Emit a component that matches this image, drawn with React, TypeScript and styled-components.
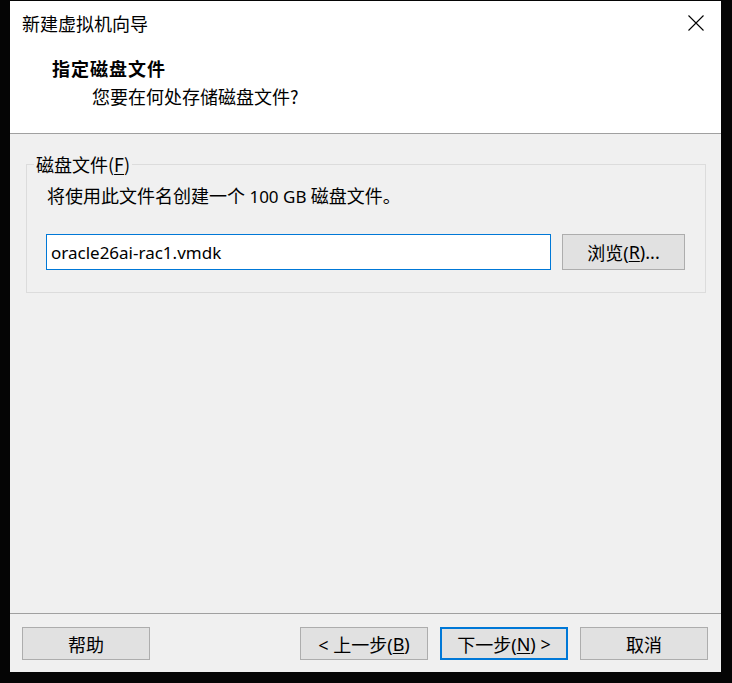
import React from "react";
import styled, { createGlobalStyle } from "styled-components";

const Global = createGlobalStyle`
  html, body { margin: 0; padding: 0; background: #050505; }
  body { font-family: "Noto Sans", "Noto Sans CJK SC", sans-serif; color: #000; }
  * { box-sizing: border-box; }
`;

const Stage = styled.div`
  padding: 1px 0 0 10px;
  width: 732px;
  height: 683px;
`;

const Window = styled.div`
  width: 711px;
  height: 671px;
  background: #f0f0f0;
  display: flex;
  flex-direction: column;
`;

const Header = styled.div`
  height: 133px;
  background: #fff;
  border-bottom: 1px solid #a0a0a0;
  display: flex;
  flex-direction: column;
`;

const TitleBar = styled.div`
  height: 43px;
  display: flex;
  align-items: center;
  justify-content: space-between;
  padding: 0 17px 0 12px;
`;

const Title = styled.div`
  font-family: "Noto Sans CJK SC", sans-serif;
  font-size: 18px;
  line-height: 24px;
`;

const CloseButton = styled.button`
  width: 16px;
  height: 16px;
  padding: 0;
  border: 0;
  background: transparent;
  display: flex;
  cursor: default;
`;

const HeadingBlock = styled.div`
  padding: 12px 0 0 42px;
  display: flex;
  flex-direction: column;
`;

const Heading = styled.div`
  font-family: "Noto Sans CJK SC", sans-serif;
  font-size: 18px;
  font-weight: 700;
  letter-spacing: 1px;
  line-height: 24px;
`;

const SubHeading = styled.div`
  font-family: "Noto Sans CJK SC", sans-serif;
  font-size: 18px;
  line-height: 24px;
  margin: 4px 0 0 40px;
`;

const Content = styled.div`
  flex: 1;
  padding: 21px 15px 0 16px;
`;

const Group = styled.fieldset`
  margin: 0;
  min-width: 0;
  border: 1px solid #dcdcdc;
  padding: 11px 20px 22px 19px;
`;

const Legend = styled.legend`
  font-family: "Noto Sans CJK SC", sans-serif;
  font-size: 18px;
  line-height: 18px;
  padding: 0 2px;
  margin-left: -12px;
`;

const Mnemonic = styled.span`
  text-decoration: underline;
  text-underline-offset: 2px;
`;

const Info = styled.div`
  font-size: 18px;
  line-height: 23px;
  padding-left: 1px;
  font-family: "Noto Sans CJK SC", sans-serif;
`;

const Latin = styled.span`
  font-family: "Noto Sans", sans-serif;
  font-size: 17px;
`;

const FileRow = styled.div`
  margin-top: 26px;
  display: flex;
  gap: 11px;
`;

const FileInput = styled.input`
  flex: 1;
  min-width: 0;
  height: 36px;
  border: 1px solid #0078d7;
  background: #fff;
  padding: 0 4px;
  font-family: "Noto Sans", sans-serif;
  font-size: 17px;
  color: #000;
  outline: none;
`;

const Button = styled.button<{ $primary?: boolean; $w?: number; $h?: number }>`
  width: ${(p) => p.$w ?? 128}px;
  height: ${(p) => p.$h ?? 33}px;
  background: #e1e1e1;
  border: ${(p) => (p.$primary ? "2px solid #0078d7" : "1px solid #adadad")};
  font-family: "Noto Sans", "Noto Sans CJK SC", sans-serif;
  font-size: 18px;
  color: #000;
  padding: 0;
  display: flex;
  align-items: center;
  justify-content: center;
  cursor: default;
  white-space: pre;
`;

const Footer = styled.div`
  border-top: 1px solid #a0a0a0;
  height: 59px;
  padding: 13px 13px 0 12px;
  display: flex;
  align-items: flex-start;
`;

const Spacer = styled.div`
  flex: 1;
`;

const ButtonGroup = styled.div`
  display: flex;
  gap: 12px;
`;

export default function App() {
  return (
    <Stage>
      <Global />
      <Window>
        <Header>
          <TitleBar>
            <Title>新建虚拟机向导</Title>
            <CloseButton aria-label="关闭">
              <svg width="16" height="16" viewBox="0 0 16 16">
                <path d="M0.5 0.5 L15.5 15.5 M15.5 0.5 L0.5 15.5" stroke="#000" strokeWidth="1.1" fill="none" />
              </svg>
            </CloseButton>
          </TitleBar>
          <HeadingBlock>
            <Heading>指定磁盘文件</Heading>
            <SubHeading>您要在何处存储磁盘文件?</SubHeading>
          </HeadingBlock>
        </Header>
        <Content>
          <Group>
            <Legend>
              磁盘文件(<Mnemonic>F</Mnemonic>)
            </Legend>
            <Info>
              将使用此文件名创建一个<Latin> 100 GB </Latin>磁盘文件。
            </Info>
            <FileRow>
              <FileInput defaultValue="oracle26ai-rac1.vmdk" />
              <Button $w={123} $h={36}>
                浏览(<Mnemonic>R</Mnemonic>)...
              </Button>
            </FileRow>
          </Group>
        </Content>
        <Footer>
          <Button>帮助</Button>
          <Spacer />
          <ButtonGroup>
            <Button>
              {"< 上一步("}<Mnemonic>B</Mnemonic>)
            </Button>
            <Button $primary>
              下一步(<Mnemonic>N</Mnemonic>){" >"}
            </Button>
            <Button>取消</Button>
          </ButtonGroup>
        </Footer>
      </Window>
    </Stage>
  );
}
